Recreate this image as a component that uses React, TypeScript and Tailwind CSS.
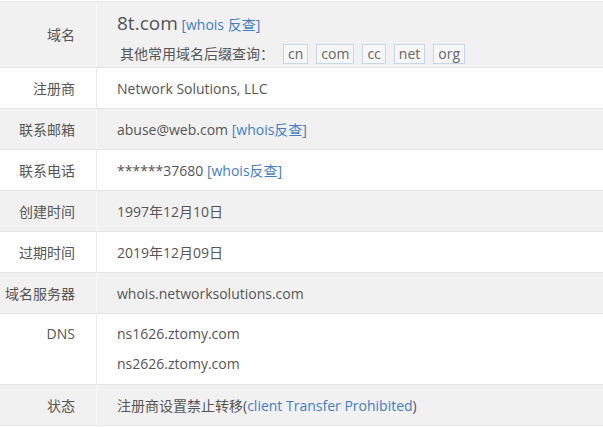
import React from "react";

const font = { fontFamily: '"Open Sans", "Noto Sans CJK SC", sans-serif' };

type Row = { label: string; grey: boolean; value: React.ReactNode };

const Link = ({ children }: { children: React.ReactNode }) => (
  <span className="text-[#3f7ec7]">{children}</span>
);

const suffixes = ["cn", "com", "cc", "net", "org"];

const rows: Row[] = [
  {
    label: "注册商",
    grey: false,
    value: "Network Solutions, LLC",
  },
  {
    label: "联系邮箱",
    grey: true,
    value: (
      <>
        abuse@web.com <Link>[whois反查]</Link>
      </>
    ),
  },
  {
    label: "联系电话",
    grey: false,
    value: (
      <>
        ******37680 <Link>[whois反查]</Link>
      </>
    ),
  },
  { label: "创建时间", grey: true, value: "1997年12月10日" },
  { label: "过期时间", grey: false, value: "2019年12月09日" },
  { label: "域名服务器", grey: true, value: "whois.networksolutions.com" },
];

export default function App() {
  return (
    <div className="w-[603px] h-[427px] bg-white text-[14px] text-[#555]" style={font}>
      <div className="border-t border-[#e6e6e6] mt-px">
        {/* domain row */}
        <div className="flex bg-[#f1f1f1] border-b border-[#e6e6e6] h-[66px]">
          <div className="w-[97px] shrink-0 border-r border-[#f8f8f8] flex items-center justify-end pr-[21px]">
            域名
          </div>
          <div className="pl-5 pt-[8px]">
            <div className="leading-[26px]">
              <span className="text-[19px]">8t.com</span> <Link>[whois 反查]</Link>
            </div>
            <div className="flex items-center mt-[5px] pl-[3px]">
              <span className="mr-[9px]">其他常用域名后缀查询：</span>
              <div className="flex gap-[8px]">
                {suffixes.map((s) => (
                  <span
                    key={s}
                    className="border border-[#c5d8ea] bg-[#f7f7f7] px-[4px] leading-[18px] text-[#666]"
                  >
                    {s}
                  </span>
                ))}
              </div>
            </div>
          </div>
        </div>

        {rows.map((r) => (
          <div
            key={r.label}
            className={`flex border-b border-[#e6e6e6] h-[41px] ${r.grey ? "bg-[#f1f1f1]" : "bg-white"}`}
          >
            <div
              className={`w-[97px] shrink-0 border-r flex items-center justify-end pr-[21px] ${
                r.grey ? "border-[#f8f8f8]" : "border-[#ececec]"
              }`}
            >
              {r.label}
            </div>
            <div className="pl-5 flex items-center">
              <span>{r.value}</span>
            </div>
          </div>
        ))}

        {/* DNS row */}
        <div className="flex border-b border-[#e6e6e6] bg-white h-[71px]">
          <div className="w-[97px] shrink-0 border-r border-[#ececec] text-right pr-[21px] pt-[5px] leading-[30px]">
            DNS
          </div>
          <div className="pl-5 pt-[5px] leading-[30px]">
            <div>ns1626.ztomy.com</div>
            <div>ns2626.ztomy.com</div>
          </div>
        </div>

        {/* status row */}
        <div className="flex border-b border-[#e6e6e6] bg-[#f1f1f1] h-[41px]">
          <div className="w-[97px] shrink-0 border-r border-[#f8f8f8] flex items-center justify-end pr-[21px]">
            状态
          </div>
          <div className="pl-5 flex items-center">
            <span>
              注册商设置禁止转移(<Link>client Transfer Prohibited</Link>)
            </span>
          </div>
        </div>
      </div>
    </div>
  );
}
